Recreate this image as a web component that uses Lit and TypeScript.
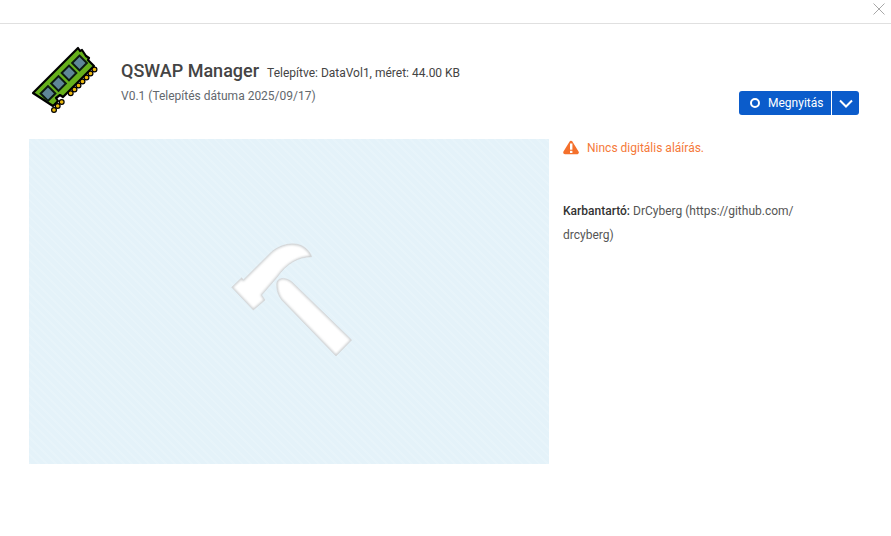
import { LitElement, html, css, svg } from "lit";
import { customElement } from "lit/decorators.js";

const pins = [[74.5,34.5],[70.5,38.5],[66.5,42.5],[62.5,46.5],[58.5,50.5],[54.5,54.5],[50.7,58.2],[41.7,67],[37.7,71],[34,75]];
const chips = [[59.5,28],[49,38],[38.5,48.5],[28,58.5]];
const head = "M231.7 287.3L241.7 277.7L243.3 280L271.7 251.7C285 241 305 240 311.7 256.7C298 257 287 263 276.7 277.7L261.7 295L265 300L253.3 310Z";
const handle = "M276.7 285C276 278 284 276 291.7 281.7L351.7 340L336 356L281.7 300C278 295 276.7 290 276.7 285Z";

@customElement("app-root")
export class AppRoot extends LitElement {
  static styles = css`
    :host { display: block; width: 891px; height: 536px; background: #fff; font-family: Roboto, "Liberation Sans", sans-serif; color: #444; overflow: hidden; }
    .top { border-bottom: 1px solid #e0e0e0; display: flex; justify-content: flex-end; align-items: flex-start; padding: 3px 6px 0 0; height: 20px; }
    .close { display: block; width: 12px; height: 12px; }
    .header { display: flex; height: 115px; box-sizing: border-box; padding: 0 32px 0 20px; }
    .logo { width: 90px; height: 90px; margin-top: 11px; flex: none; display: block; }
    .meta { flex: 1; margin: 0 0 0 11px; padding-top: 36px; }
    .title-row { display: flex; align-items: baseline; height: 22px; }
    h1 { margin: 0; font-size: 18px; font-weight: 500; line-height: 22px; color: #444; }
    .installed { font-size: 12px; margin-left: 8px; color: #444; }
    .version { font-size: 12px; line-height: 16px; margin-top: 6px; color: #62676d; }
    .open { align-self: flex-start; margin-top: 67px; display: flex; height: 24px; width: 120px; background: #0b5ccb; border-radius: 3px; color: #fff; font-size: 12px; }
    .open-main { width: 93px; flex: none; display: flex; align-items: center; padding-left: 11px; box-sizing: border-box; gap: 8px; border-right: 1px solid #fff; }
    .ring { width: 10px; height: 10px; border: 2.5px solid #fff; border-radius: 50%; box-sizing: border-box; flex: none; }
    .open-caret { flex: 1; display: flex; align-items: center; justify-content: center; }
    .body { display: flex; padding: 0 29px; }
    .shot { width: 520px; height: 325px; flex: none; display: block; background-color: #e4f2f9; background-image: repeating-linear-gradient(45deg, rgba(255,255,255,.13) 0 2px, transparent 2px 6px); }
    .side { margin-left: 14px; width: 240px; font-size: 12px; }
    .warn { display: flex; align-items: center; gap: 8px; color: #f5793a; height: 17px; }
    .warn svg { display: block; flex: none; }
    .maint { margin-top: 43px; line-height: 24px; color: #555; }
    .maint div { height: 24px; }
    .maint b { font-weight: 500; color: #333; }
  `;

  render() {
    return html`
      <div class="top">
        <svg class="close" viewBox="0 0 12 12" fill="none" stroke="#a8a8a8" stroke-width="1"><path d="M.5.5l11 11M11.5.5l-11 11"/></svg>
      </div>
      <div class="header">
        <svg class="logo" viewBox="0 0 90 90">
          <path d="M58 13L60 16L62 15L66 21L69 23L68 25L74 31L43 62L40 60L36 63L38 66L33 71L13 58Z" fill="#66b01c" stroke="#000" stroke-width="2.2" stroke-linejoin="round"/>
          ${chips.map(([x,y]) => svg`<rect x="${x-5.2}" y="${y-5.2}" width="10.4" height="10.4" transform="rotate(-45 ${x} ${y})" fill="#5f8698" stroke="#0c1a12" stroke-width="2"/>`)}
          ${pins.map(([x,y]) => svg`<circle cx="${x}" cy="${y}" r="2.4" fill="#eab80c" stroke="#000" stroke-width="1.2"/>`)}
        </svg>
        <div class="meta">
          <div class="title-row"><h1>QSWAP Manager</h1><span class="installed">Telepítve: DataVol1, méret: 44.00 KB</span></div>
          <div class="version">V0.1 (Telepítés dátuma 2025/09/17)</div>
        </div>
        <div class="open">
          <div class="open-main"><span class="ring"></span><span>Megnyitás</span></div>
          <div class="open-caret"><svg width="14" height="9" viewBox="0 0 14 9" fill="none" stroke="#fff" stroke-width="2"><path d="M1 1.5l6 6 6-6"/></svg></div>
        </div>
      </div>
      <div class="body">
        <svg class="shot" viewBox="29 139 520 325">
          <defs>
            <filter id="soft" x="-10%" y="-10%" width="120%" height="120%"><feGaussianBlur stdDeviation="0.8"/></filter>
            <clipPath id="hh"><path d="${head}"/><path d="${handle}"/></clipPath>
          </defs>
          <path d="${head}" fill="#fff" stroke="#d6d9db" stroke-width=".7" stroke-linejoin="round"/>
          <path d="${handle}" fill="#fff" stroke="#d6d9db" stroke-width=".7" stroke-linejoin="round"/>
          <g clip-path="url(#hh)" fill="none" stroke="#c6c9cb" stroke-width="2" filter="url(#soft)">
            <path d="${head}"/><path d="${handle}"/>
          </g>
        </svg>
        <div class="side">
          <div class="warn">
            <svg width="16" height="15" viewBox="0 0 16 15"><path d="M8 2.6L14 12.4H2Z" fill="#f4702c" stroke="#f4702c" stroke-width="3.6" stroke-linejoin="round"/><rect x="7" y="3.5" width="2.4" height="6.2" fill="#fff"/><rect x="7" y="10.8" width="2.4" height="2.2" fill="#fff"/></svg>
            <span>Nincs digitális aláírás.</span>
          </div>
          <div class="maint">
            <div><b>Karbantartó:</b> <span>DrCyberg (https://github.com/</span></div>
            <div>drcyberg)</div>
          </div>
        </div>
      </div>
    `;
  }
}
